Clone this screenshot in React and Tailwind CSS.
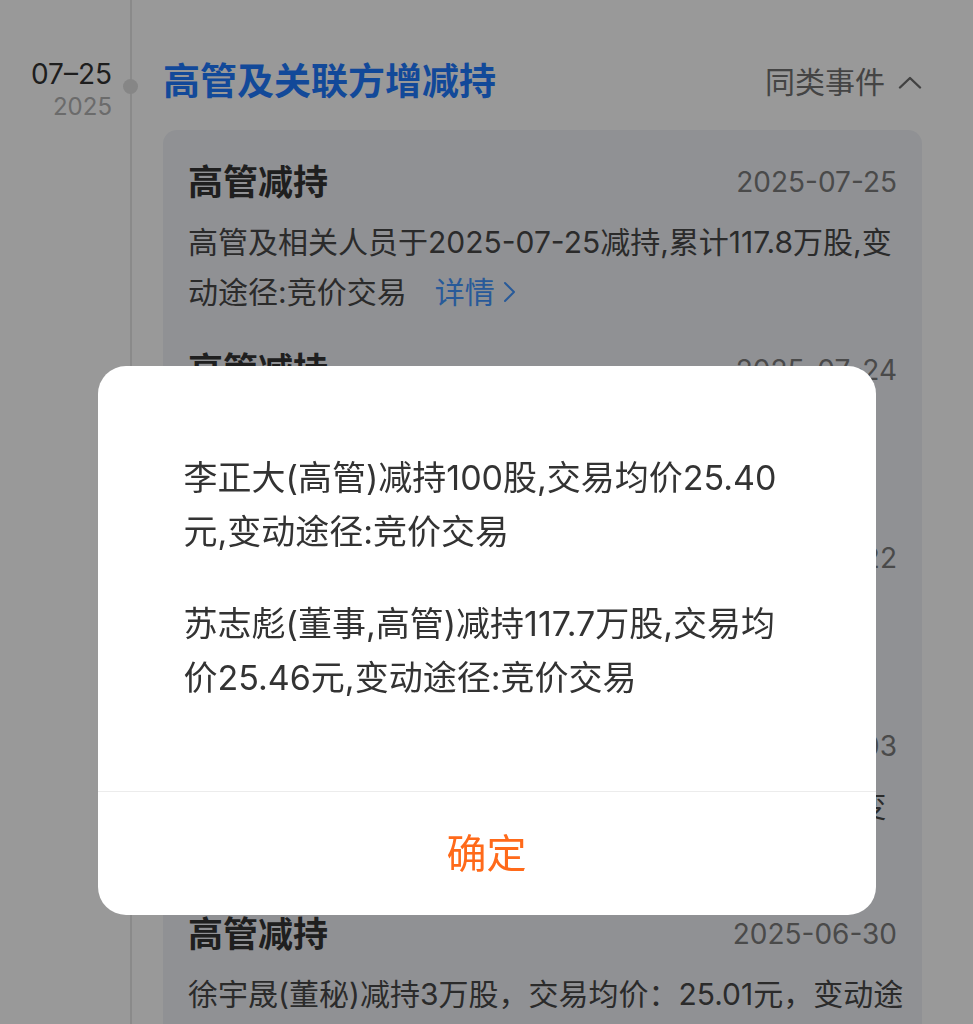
import React from 'react';

const items = [
  {
    date: '2025-07-25',
    lines: ['高管及相关人员于2025-07-25减持,累计117.8万股,变', '动途径:竞价交易'],
    more: true,
  },
  {
    date: '2025-07-24',
    lines: ['高管及相关人员于2025-07-24减持,累计117.7万', '股,变动途径:竞价交易'],
    more: true,
  },
  {
    date: '2025-07-22',
    lines: ['高管及相关人员于2025-07-22减持,累计5万股', '变动途径:竞价交易'],
    more: true,
  },
  {
    date: '2025-07-03',
    lines: ['高管及相关人员于2025-07-03减持,累计21.6万股,变', '动途径:竞价交易'],
    more: true,
  },
  {
    date: '2025-06-30',
    lines: ['徐宇晟(董秘)减持3万股，交易均价：25.01元，变动途', '径：竞价交易'],
    more: false,
  },
];

function ChevronUp() {
  return (
    <svg width="24" height="13" viewBox="0 0 24 13" fill="none" className="ml-[13px]">
      <polyline points="2,11.5 12,2 22,11.5" stroke="#6e6e6e" strokeWidth="2.4" strokeLinecap="round" strokeLinejoin="round" />
    </svg>
  );
}

function ChevronRight() {
  return (
    <svg width="13" height="22" viewBox="0 0 13 22" fill="none" className="ml-[8px]">
      <polyline points="2,2 11,11 2,20" stroke="#4496ff" strokeWidth="2" strokeLinecap="round" strokeLinejoin="round" />
    </svg>
  );
}

function EventItem({ item }) {
  return (
    <div className="pb-[31px]">
      <div className="flex items-center justify-between h-[44px]">
        <span className="text-[35px] font-bold text-[#353535] leading-[44px]">高管减持</span>
        <span className="text-[28px] text-[#7c7c7c] leading-[44px]">{item.date}</span>
      </div>
      <div className="mt-[13px] text-[30px] leading-[50px] text-[#484848] whitespace-nowrap">
        <div>{item.lines[0]}</div>
        <div className="flex items-center">
          <span>{item.lines[1]}</span>
          {item.more && (
            <span className="ml-[28px] flex items-center text-[#4496ff] text-[30px]">
              详情
              <ChevronRight />
            </span>
          )}
        </div>
      </div>
    </div>
  );
}

export default function App() {
  return (
    <div className="relative min-h-screen bg-white font-[Inter,'Noto_Sans_CJK_SC',sans-serif] overflow-hidden">
      <div className="flex">
        <div className="w-[130px] shrink-0 pr-[18px] text-right">
          <div className="mt-[58px] text-[28px] leading-[32px] text-[#333]">07–25</div>
          <div className="mt-[2px] text-[24px] leading-[30px] text-[#b2b2b2]">2025</div>
        </div>
        <div className="relative flex-1 min-w-0 border-l-2 border-[#e6e6e6] pl-[31px] pr-[51px] pb-[40px]">
          <div className="absolute left-[-9px] top-[79px] w-[15px] h-[15px] rounded-full bg-[#e0e0e0]" />
          <div className="mt-[57px] flex items-center justify-between h-[50px]">
            <span className="text-[37px] font-semibold text-[#1f7aff] leading-[50px]">高管及关联方增减持</span>
            <span className="flex items-center text-[30px] text-[#727272]">
              同类事件
              <ChevronUp />
            </span>
          </div>
          <div className="mt-[23px] rounded-[14px] bg-[#f0f2f7] px-[25px] pt-[30px]">
            {items.map((item) => (
              <EventItem key={item.date} item={item} />
            ))}
          </div>
        </div>
      </div>

      <div className="fixed inset-0 bg-black/40 flex justify-center items-start pt-[366px]">
        <div className="w-[778px] rounded-[28px] bg-white overflow-hidden">
          <div className="px-[86px] pt-[85px] pb-[86px] text-[34px] leading-[54px] text-[#333] whitespace-nowrap">
            <p>
              李正大(高管)减持100股,交易均价25.40
              <br />
              元,变动途径:竞价交易
            </p>
            <p className="mt-[38px]">
              苏志彪(董事,高管)减持117.7万股,交易均
              <br />
              价25.46元,变动途径:竞价交易
            </p>
          </div>
          <div className="border-t border-[#ececec] h-[124px] flex items-center justify-center">
            <button className="text-[40px] text-[#ff6a1a] leading-none">确定</button>
          </div>
        </div>
      </div>
    </div>
  );
}
